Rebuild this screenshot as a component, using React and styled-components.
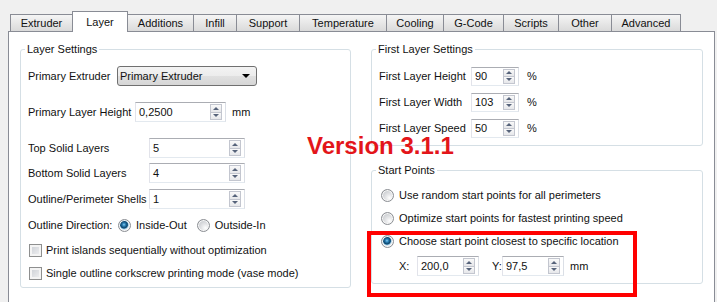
import React from 'react';
import styled, { createGlobalStyle } from 'styled-components';

const Global = createGlobalStyle`
  html, body { margin: 0; padding: 0; background: #f0f0f0; }
  body {
    font-family: "Liberation Sans", Arial, sans-serif;
    font-size: 11px;
    color: #111;
  }
`;

const Window = styled.div`
  position: relative;
  width: 717px;
  height: 302px;
  overflow: hidden;
  background: #f0f0f0;
  padding-top: 11px;
  box-sizing: border-box;
`;

const TabBar = styled.div`
  display: flex;
  align-items: flex-end;
  height: 20px;
  padding-left: 10px;
`;

const Tab = styled.div`
  box-sizing: border-box;
  flex: none;
  width: ${(p) => p.$w}px;
  height: ${(p) => (p.$active ? 21 : 17)}px;
  margin-right: -1px;
  margin-bottom: ${(p) => (p.$active ? -1 : 0)}px;
  position: relative;
  z-index: ${(p) => (p.$active ? 2 : 1)};
  border: 1px solid #898c95;
  border-bottom: none;
  background: ${(p) =>
    p.$active ? '#ffffff' : 'linear-gradient(#f5f5f5, #e6e6e6 55%, #dadada)'};
  display: flex;
  align-items: center;
  justify-content: center;
  white-space: nowrap;
  line-height: 13px;
`;

const Pane = styled.div`
  box-sizing: border-box;
  margin-left: 8px;
  width: 707px;
  height: 290px;
  border: 1px solid #898c95;
  background: #ffffff;
  padding: 17px 10px 0 11px;
  display: flex;
  gap: 20px;
  align-items: flex-start;
`;

const Column = styled.div`
  display: flex;
  flex-direction: column;
  width: ${(p) => p.$w}px;
  flex: none;
`;

const GroupBox = styled.div`
  box-sizing: border-box;
  width: 100%;
  border: 1px solid #d5dfe5;
  border-radius: 3px;
  padding: 0 7px ${(p) => p.$pb}px 7px;
  margin-top: ${(p) => p.$mt || 0}px;
`;

const GroupTitle = styled.div`
  width: fit-content;
  margin: -7px 0 0 -3px;
  padding: 0 2px;
  background: #ffffff;
  line-height: 13px;
  white-space: nowrap;
`;

const Row = styled.div`
  display: flex;
  align-items: center;
  height: 22px;
  margin-top: ${(p) => p.$mt}px;
  padding-left: ${(p) => p.$indent || 0}px;
  white-space: nowrap;
`;

const Label = styled.span`
  flex: none;
  width: ${(p) => (p.$w ? `${p.$w}px` : 'auto')};
  margin-left: ${(p) => p.$ml || 0}px;
  white-space: nowrap;
`;

const Unit = styled.span`
  margin-left: ${(p) => p.$ml}px;
`;

const Combo = styled.div`
  box-sizing: border-box;
  width: 140px;
  height: 20px;
  border: 1px solid #707070;
  border-radius: 3px;
  background: linear-gradient(#f3f3f3, #ececec 50%, #e0e0e0 51%, #d6d6d6);
  display: flex;
  align-items: center;
  justify-content: space-between;
  padding: 0 6px 0 2px;
`;

const ComboArrow = styled.span`
  width: 0;
  height: 0;
  border-left: 4px solid transparent;
  border-right: 4px solid transparent;
  border-top: 4px solid #000;
`;

const Spin = styled.div`
  box-sizing: border-box;
  width: ${(p) => p.$w}px;
  height: ${(p) => p.$h || 20}px;
  border: 1px solid;
  border-color: #abadb3 #dbdfe6 #e3e9ef #e2e3ea;
  background: #fff;
  display: flex;
  align-items: stretch;
  padding: 1px 3px 1px 3px;
`;

const SpinText = styled.span`
  flex: 1;
  display: flex;
  align-items: center;
`;

const SpinButtons = styled.div`
  display: flex;
  flex-direction: column;
  width: 12px;
`;

const SpinBtn = styled.div`
  flex: 1;
  box-sizing: border-box;
  border: 1px solid #c3c6cf;
  margin-top: ${(p) => (p.$down ? -1 : 0)}px;
  background: linear-gradient(#f9f9f9, #e6e7ea);
  display: flex;
  align-items: center;
  justify-content: center;
`;

const Tri = styled.span`
  width: 0;
  height: 0;
  border-left: 3px solid transparent;
  border-right: 3px solid transparent;
  ${(p) =>
    p.$down ? 'border-top: 3px solid #56637a;' : 'border-bottom: 3px solid #56637a;'}
`;

const Radio = styled.span`
  flex: none;
  box-sizing: border-box;
  width: 13px;
  height: 13px;
  border-radius: 50%;
  border: 1px solid #8b8e93;
  box-shadow: inset 0 0 0 1px #f7f7f7;
  background: ${(p) =>
    p.$on
      ? 'radial-gradient(circle at 45% 42%, #8fd0f2 0, #2f86bc 1.4px, #0f476f 3.2px, #1c5d88 3.7px, #93c3df 4.3px, #e8edf1 5.2px)'
      : 'radial-gradient(circle at 68% 72%, #ffffff 0, #e4e5e7 35%, #c3c6ca 85%)'};
`;

const Check = styled.span`
  flex: none;
  box-sizing: border-box;
  width: 13px;
  height: 13px;
  border: 1px solid #8e8f8f;
  box-shadow: inset 0 0 0 2px #f4f4f4;
  background: linear-gradient(135deg, #c9cdd3, #f3f3f4);
`;

const Option = styled.span`
  display: flex;
  align-items: center;
  gap: 5px;
  margin-right: ${(p) => p.$mr || 0}px;
`;

const CheckOption = styled.span`
  display: flex;
  align-items: center;
  gap: 4px;
  padding-left: 1px;
`;

const VersionNote = styled.div`
  position: absolute;
  left: 307px;
  top: 137px;
  font-family: "Liberation Sans", Arial, sans-serif;
  font-weight: bold;
  font-size: 24px;
  line-height: 18px;
  color: #e3151a;
  white-space: nowrap;
`;

const Highlight = styled.div`
  position: absolute;
  left: 367px;
  top: 231px;
  width: 270px;
  height: 66px;
  box-sizing: border-box;
  border: 4px solid #ff0000;
  pointer-events: none;
`;

const tabs = [
  ['Extruder', 63],
  ['Layer', 56, true],
  ['Additions', 67],
  ['Infill', 44],
  ['Support', 64],
  ['Temperature', 88],
  ['Cooling', 58],
  ['G-Code', 61],
  ['Scripts', 56],
  ['Other', 54],
  ['Advanced', 70],
];

function SpinBox({ value, w, h }) {
  return (
    <Spin $w={w} $h={h}>
      <SpinText>{value}</SpinText>
      <SpinButtons>
        <SpinBtn>
          <Tri />
        </SpinBtn>
        <SpinBtn $down>
          <Tri $down />
        </SpinBtn>
      </SpinButtons>
    </Spin>
  );
}

export default function App() {
  return (
    <Window>
      <Global />
      <TabBar>
        {tabs.map(([name, w, active]) => (
          <Tab key={name} $w={w} $active={active}>
            {name}
          </Tab>
        ))}
      </TabBar>
      <Pane>
        <Column $w={331}>
          <GroupBox $pb={3}>
            <GroupTitle>Layer Settings</GroupTitle>
            <Row $mt={9}>
              <Label $w={89}>Primary Extruder</Label>
              <Combo>
                <span>Primary Extruder</span>
                <ComboArrow />
              </Combo>
            </Row>
            <Row $mt={14}>
              <Label $w={107}>Primary Layer Height</Label>
              <SpinBox value="0,2500" w={91} />
              <Unit $ml={6}>mm</Unit>
            </Row>
            <Row $mt={14}>
              <Label $w={121}>Top Solid Layers</Label>
              <SpinBox value="5" w={96} />
            </Row>
            <Row $mt={3}>
              <Label $w={121}>Bottom Solid Layers</Label>
              <SpinBox value="4" w={96} />
            </Row>
            <Row $mt={4}>
              <Label $w={121}>Outline/Perimeter Shells</Label>
              <SpinBox value="1" w={96} />
            </Row>
            <Row $mt={4}>
              <Label $w={90}>Outline Direction:</Label>
              <Option $mr={10}>
                <Radio $on />
                Inside-Out
              </Option>
              <Option>
                <Radio />
                Outside-In
              </Option>
            </Row>
            <Row $mt={3}>
              <CheckOption>
                <Check />
                Print islands sequentially without optimization
              </CheckOption>
            </Row>
            <Row $mt={1}>
              <CheckOption>
                <Check />
                Single outline corkscrew printing mode (vase mode)
              </CheckOption>
            </Row>
          </GroupBox>
        </Column>
        <Column $w={332}>
          <GroupBox $pb={6}>
            <GroupTitle>First Layer Settings</GroupTitle>
            <Row $mt={9}>
              <Label $w={92}>First Layer Height</Label>
              <SpinBox value="90" w={48} h={19} />
              <Unit $ml={8}>%</Unit>
            </Row>
            <Row $mt={4}>
              <Label $w={92}>First Layer Width</Label>
              <SpinBox value="103" w={48} h={19} />
              <Unit $ml={8}>%</Unit>
            </Row>
            <Row $mt={4}>
              <Label $w={92}>First Layer Speed</Label>
              <SpinBox value="50" w={48} h={19} />
              <Unit $ml={8}>%</Unit>
            </Row>
          </GroupBox>
          <GroupBox $mt={24} $pb={6}>
            <GroupTitle>Start Points</GroupTitle>
            <Row $mt={7} $indent={2}>
              <Option>
                <Radio />
                Use random start points for all perimeters
              </Option>
            </Row>
            <Row $mt={1} $indent={2}>
              <Option>
                <Radio />
                Optimize start points for fastest printing speed
              </Option>
            </Row>
            <Row $mt={1} $indent={2}>
              <Option>
                <Radio $on />
                Choose start point closest to specific location
              </Option>
            </Row>
            <Row $mt={3} $indent={20}>
              <Label $w={18}>X:</Label>
              <SpinBox value="200,0" w={62} />
              <Label $ml={13} $w={10}>Y:</Label>
              <SpinBox value="97,5" w={62} />
              <Unit $ml={6}>mm</Unit>
            </Row>
          </GroupBox>
        </Column>
      </Pane>
      <VersionNote>Version 3.1.1</VersionNote>
      <Highlight />
    </Window>
  );
}
